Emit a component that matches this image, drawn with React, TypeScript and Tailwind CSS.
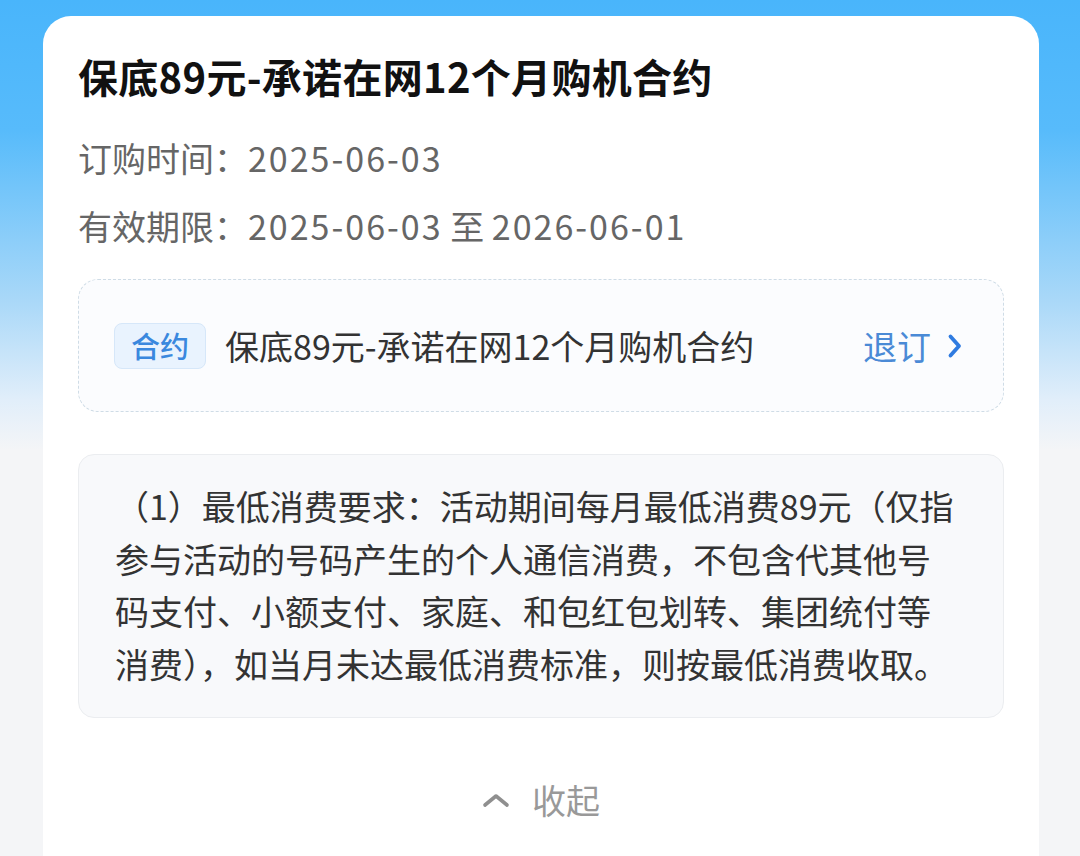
import React from 'react';

const cjk = '"Noto Sans CJK SC", "Noto Sans", sans-serif';

const ChevronRight = () => (
  <svg width="16" height="26" viewBox="0 0 16 26" fill="none">
    <path d="M3.5 3.5l8.5 9.5-8.5 9.5" stroke="#2f7be0" strokeWidth="3.8" strokeLinecap="round" strokeLinejoin="round" />
  </svg>
);

const ChevronUp = () => (
  <svg width="28" height="16" viewBox="0 0 28 16" fill="none">
    <path d="M3 13L14 4l11 9" stroke="#8f8f8f" strokeWidth="3.6" strokeLinecap="round" strokeLinejoin="round" />
  </svg>
);

export default function App() {
  return (
    <div
      className="h-[856px] overflow-hidden bg-[linear-gradient(180deg,#49b5fb_0px,#57bbfb_130px,#a9d8f8_300px,#e1eefa_400px,#f4f5f7_450px,#f4f5f7_100%)] pl-[43px] pr-[41px] pt-[16px]"
      style={{ fontFamily: cjk }}
    >
      <div className="min-h-[900px] rounded-t-[28px] bg-white px-[35px] pt-[36px]">
        {/* Header */}
        <h1 className="text-[40px] font-bold leading-[48px] tracking-[0.3px] text-[#111]">保底89元-承诺在网12个月购机合约</h1>
        <div className="mt-[24px] text-[34px] text-[#666]">
          <p className="leading-[68px]">
            订购时间：<span className="tracking-[2px]">2025-06-03</span>
          </p>
          <p className="leading-[68px]">
            有效期限：<span className="tracking-[2px]">2025-06-03</span> 至{' '}
            <span className="tracking-[2px]">2026-06-01</span>
          </p>
        </div>

        {/* Contract row */}
        <div className="mt-[19px] flex h-[133px] items-center rounded-[20px] border border-dashed border-[#cfdce6] bg-[#fbfcfe] pl-[35px] pr-[40px]">
          <span className="flex h-[46px] items-center rounded-[8px] border border-[#d6e7f9] bg-[#e9f3fe] px-[16px] text-[29px] font-medium text-[#3a88de]">
            合约
          </span>
          <span className="ml-[19px] flex-1 text-[34px] text-[#333]">保底89元-承诺在网12个月购机合约</span>
          <span className="flex items-center gap-[16px] text-[34px] text-[#4a8ad6]">
            退订
            <ChevronRight />
          </span>
        </div>

        {/* Rules */}
        <div className="mt-[42px] rounded-[16px] border border-[#ebedf0] bg-[#f8f9fb] pb-[27px] pl-[36px] pr-[44px] pt-[25px] text-[34px] leading-[52.5px] text-[#333]">
          （1）最低消费要求：活动期间每月最低消费89元（仅指参与活动的号码产生的个人通信消费，不包含代其他号码支付、小额支付、家庭、和包红包划转、集团统付等消费），如当月未达最低消费标准，则按最低消费收取。
        </div>

        {/* Collapse */}
        <div className="mt-[52px] flex items-center justify-center gap-[22px] text-[34px] leading-[60px] text-[#999]">
          <ChevronUp />
          <span>收起</span>
        </div>
      </div>
    </div>
  );
}
